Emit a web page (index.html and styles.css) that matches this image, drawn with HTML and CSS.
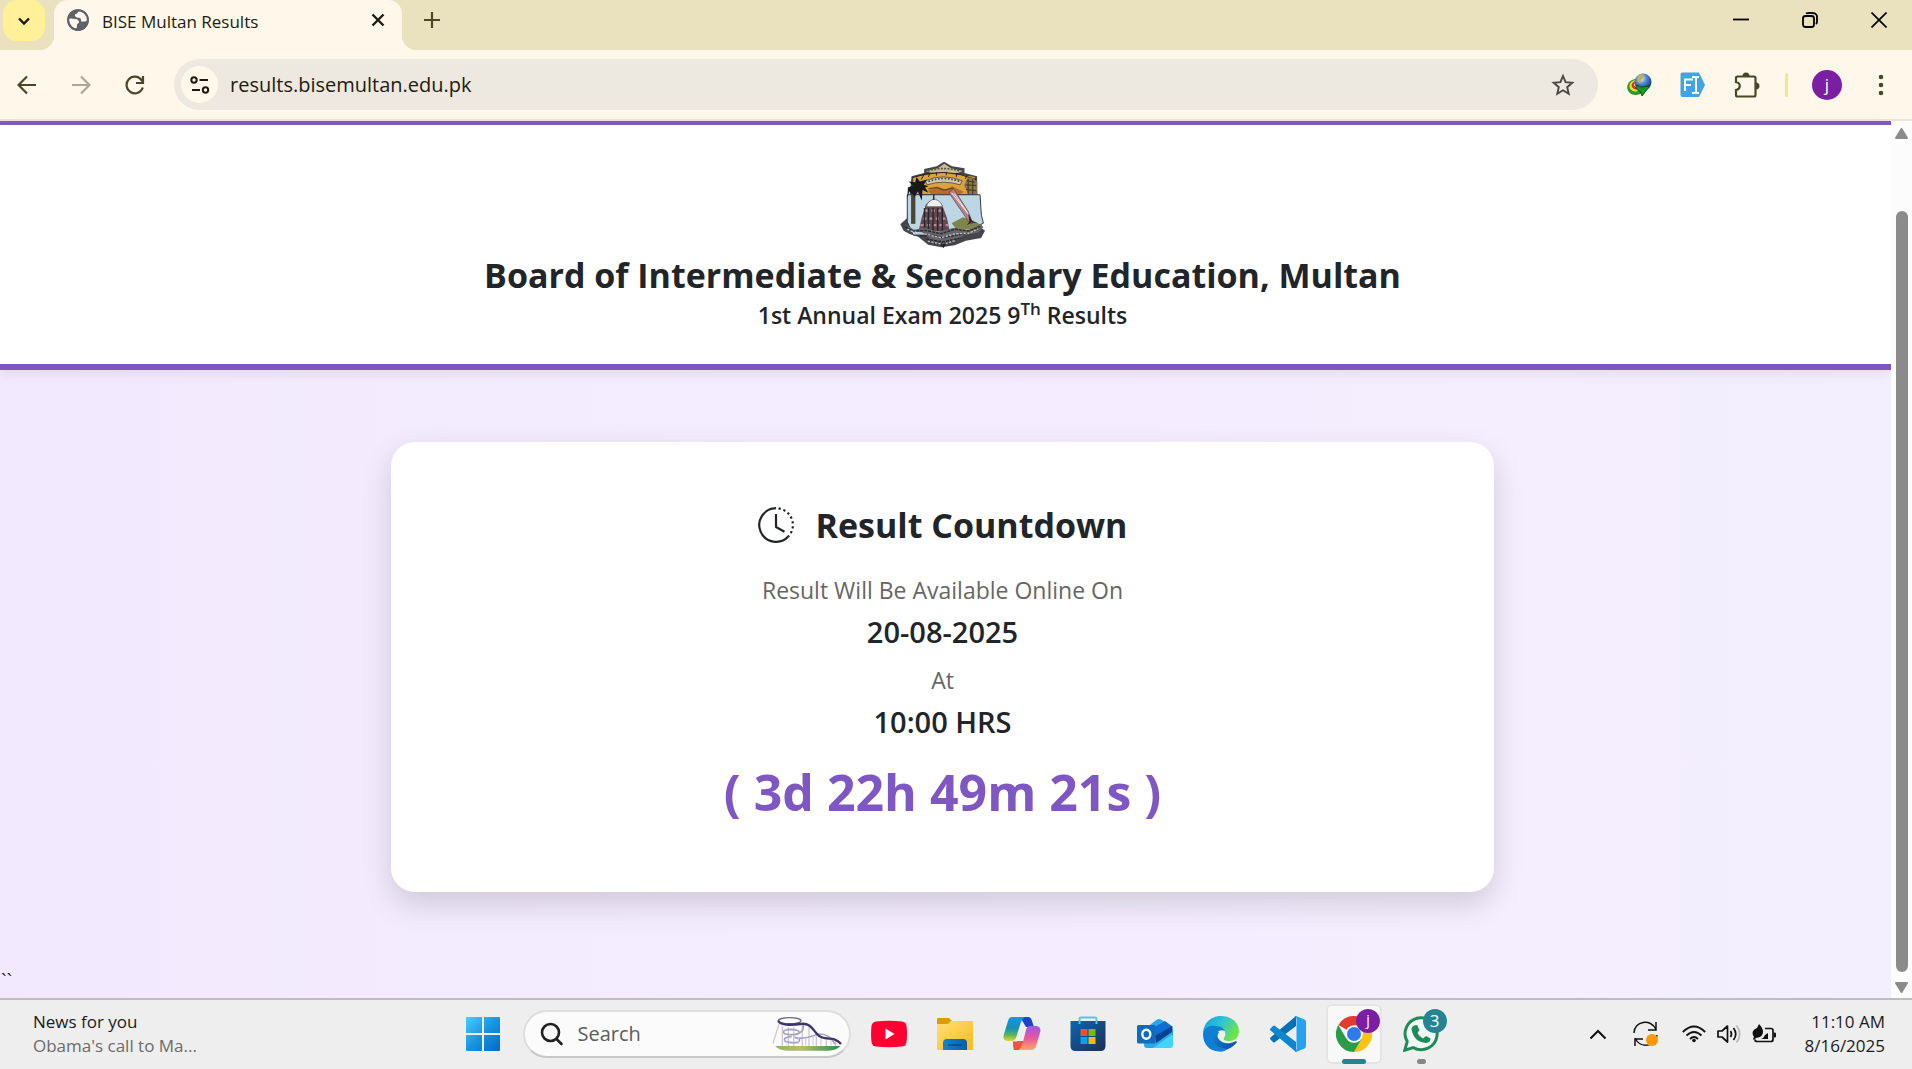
FILE: index.html
```html
<!DOCTYPE html>
<html lang="en">
<head>
<meta charset="utf-8">
<title>BISE Multan Results</title>
<link rel="stylesheet" href="styles.css">
</head>
<body>
<div class="screen">
  <header class="tabstrip">
    <button class="tab-search" aria-label="Search tabs"><svg width="14" height="14" viewBox="0 0 14 14"><path d="M2 4.500l5 5 5-5" fill="none" stroke="#1d1c10" stroke-width="2.400"/></svg></button>
    <div class="tab">
      <svg width="22" height="22" viewBox="0 0 22 22"><circle cx="11" cy="11" r="9.800" fill="#5f6368" stroke="#5f6368" stroke-width="2"/><path d="M12.500 2c-1.500 1-2 2.500-3.500 3-2 .500-1 3 1 3.500 2 .600 4 0 4 2.500s1.500 1.500 3 1.500 3 0 3.500-2C20.500 6 17 2.500 12.500 2zM2 10c2-1 4 0 6 0s4 1 4 3-2 1-2 3 0 3-1 3.500C4 19 1.500 15 2 10z" fill="#fff8ea"/><circle cx="11" cy="11" r="9.800" fill="none" stroke="#5f6368" stroke-width="2"/></svg>
      <span class="tab-title">BISE Multan Results</span>
      <button class="plain" aria-label="Close tab"><svg width="14" height="14" viewBox="0 0 14 14"><path d="M1.500 1.500l11 11M12.500 1.500l-11 11" stroke="#1d1c10" stroke-width="2.400"/></svg></button>
    </div>
    <button class="plain new-tab" aria-label="New tab"><svg width="16" height="16" viewBox="0 0 16 16"><path d="M8 0v16M0 8h16" stroke="#4b4628" stroke-width="2.200"/></svg></button>
    <div class="window-buttons">
      <button class="plain" aria-label="Minimize"><svg width="16" height="16" viewBox="0 0 16 16"><path d="M0 7.500h16" stroke="#000" stroke-width="1.800"/></svg></button>
      <button class="plain" aria-label="Restore"><svg width="16" height="16" viewBox="0 0 16 16" fill="none" stroke="#000" stroke-width="1.800"><rect x="1" y="4" width="11" height="11" rx="2.500"/><path d="M4 1.500c1-.800 8-.800 9 0s2 1 2 3v5c0 1-.500 2-1 2.500"/></svg></button>
      <button class="plain" aria-label="Close"><svg width="16" height="16" viewBox="0 0 16 16"><path d="M.5.5l15 15M15.500.5l-15 15" stroke="#000" stroke-width="1.700"/></svg></button>
    </div>
  </header>

  <nav class="toolbar">
    <div class="nav-buttons">
      <button class="plain" aria-label="Back"><svg width="20" height="20" viewBox="0 0 20 20" fill="none" stroke="#4b4628" stroke-width="2.200"><path d="M19 10H2M10 1.500L1.500 10l8.500 8.500"/></svg></button>
      <button class="plain" aria-label="Forward"><svg width="20" height="20" viewBox="0 0 20 20" fill="none" stroke="#aaa698" stroke-width="2.200"><path d="M1 10h17M10 1.500l8.500 8.500-8.500 8.500"/></svg></button>
      <button class="plain" aria-label="Reload"><svg width="20" height="20" viewBox="0 0 20 20" fill="none" stroke="#4b4628" stroke-width="2.200"><path d="M17.800 12.500A8.300 8.300 0 1 1 16.500 5l1.500 2M18 1v7h-7"/></svg></button>
    </div>
    <div class="omnibox">
      <button class="site-info" aria-label="Site information"><svg width="20" height="18" viewBox="0 0 20 18" fill="none" stroke="#1d1c10" stroke-width="2"><circle cx="4" cy="4" r="2.700"/><path d="M9.500 4H18M2 14h8"/><circle cx="15.500" cy="14" r="2.700"/></svg></button>
      <input class="address" type="text" aria-label="Address" value="results.bisemultan.edu.pk">
      <button class="plain" aria-label="Bookmark"><svg width="24" height="24" viewBox="0 0 24 24" fill="none" stroke="#4b4841" stroke-width="1.900"><path d="M12 3l2.600 6.200 6.700.6-5.100 4.400 1.500 6.600L12 17.300l-5.700 3.500 1.500-6.600-5.100-4.400 6.700-.6z"/></svg></button>
    </div>
    <div class="extensions">
      <button class="plain" aria-label="Download manager"><svg width="26" height="24" viewBox="0 0 26 24"><defs><radialGradient id="globe" cx=".4" cy=".3" r=".8"><stop offset="0" stop-color="#dff0ff"/><stop offset=".4" stop-color="#4c86d8"/><stop offset="1" stop-color="#0a1e50"/></radialGradient></defs><path d="M9 6C0 8-1 17 5 21c4 2 9 1 12-2l-2-4z" fill="#2c9a2c"/><path d="M9 7c-7 2-7 9-2 11 3 1 6 0 8-2z" fill="#f1e228"/><path d="M10 8c-5 1-6 6-2 8 3 1 5 0 6-2z" fill="#e0301c"/><path d="M11 9c-3 1-4 4-1 5h3z" fill="#fff"/><circle cx="17" cy="9" r="8.500" fill="url(#globe)"/><path d="M12 3c3-3 7-1 6 1s-4 3-3 5-3 1-4-1z" fill="#bcb35d"/><path d="M10 12l5 2 9-1-8 10-2-5c-3 0-4-3-4-6z" fill="#159a20" stroke="#063f0a" stroke-width=".8"/></svg></button>
      <button class="plain" aria-label="Font identifier"><svg width="26" height="26" viewBox="0 0 26 26"><path d="M2.500.5H19L25 13l-6 12H2.500a2 2 0 0 1-2-2V2.500a2 2 0 0 1 2-2z" fill="#41a4e4"/><path d="M5 19V7.500h8M5 13h6M12 5h2.500c1 0 1.500.7 1.500 1.500C16 5.700 16.500 5 17.500 5H19M16 6.500v13M12 21h2.500c1 0 1.500-.7 1.500-1.500 0 .8.500 1.500 1.500 1.500H19" fill="none" stroke="#fff" stroke-width="2"/></svg></button>
      <button class="plain" aria-label="Extensions"><svg width="26" height="26" viewBox="0 0 26 26"><path d="M3 4.500h17a1.500 1.500 0 0 1 1.500 1.500v17a1.500 1.500 0 0 1-1.500 1.500H3.500a1.500 1.500 0 0 1-1.500-1.500V18c5-1 5-7 0-8V6a1.500 1.500 0 0 1 1.500-1.500z" fill="none" stroke="#4b4628" stroke-width="2.200"/><path d="M8.500 4a3.500 3.500 0 0 1 7 0zM22 10.500a3.500 3.500 0 0 1 0 7z" fill="#4b4628"/></svg></button>
      <span class="divider"></span>
      <button class="profile" aria-label="Profile">j</button>
      <button class="plain" aria-label="Menu"><svg width="6" height="22" viewBox="0 0 6 22" fill="#4b4628"><circle cx="3" cy="3" r="2.300"/><circle cx="3" cy="11" r="2.300"/><circle cx="3" cy="19" r="2.300"/></svg></button>
    </div>
  </nav>

  <div class="viewport">
    <main class="page">
      <header class="board">
        <svg class="crest" width="88" height="88" viewBox="122 62 256 266">
          <path d="M155 108l38-10v-12l38-8 22-14 24 14 38 6v14l38 10v20l4 130 20 15-12 22-46 8-34 14-40 6-40-8-30-24-26-8-18-10-10-20 20-18z" fill="#45454a"/>
          <path d="M198 92l36-8 20-14 20 14 36 8-16 6h-80z" fill="#c6bb95"/>
          <path d="M204 92q46-14 98 0" fill="none" stroke="#5c5644" stroke-width="5" stroke-dasharray="6 4"/>
          <path d="M160 110l92-14 94 14v52H160z" fill="#dca23f"/>
          <path d="M158 112q94-34 192 6M184 118l8-14M206 110l4-12M230 106v-10M260 105v-10M290 110l2-12M318 116l4-12" fill="none" stroke="#222" stroke-width="3"/>
          <path d="M196 122q54-24 112 0l-6 12q-52-16-100 0z" fill="#cfc7ad" stroke="#302d2b" stroke-width="2"/>
          <path d="M206 124q46-18 94 0" fill="none" stroke="#444" stroke-width="5" stroke-dasharray="5 5"/>
          <path d="M204 152l30-12 24 8 20-10 36 18-18 8h-80z" fill="#b86b2c"/>
          <path d="M206 146l24-4 22 8 30-6" fill="none" stroke="#6a4a22" stroke-width="4"/>
          <path d="M314 136l8-20 12-6 20 14-2 40-26-2z" fill="#8c7744"/>
          <path d="M322 122l24 4M318 134l32 2M320 148l30 4M326 116v46M340 118v44" stroke="#3d3528" stroke-width="3"/>
          <path d="M142 164h220l4 62 6 24-40 20-54 16H160l-18-40z" fill="#bdd6e6" stroke="#37383c" stroke-width="3"/>
          <path d="M160 162v90" stroke="#4c4630" stroke-width="13"/>
          <path d="M162 166l-14-12-6 22 2-34 16-6-14-12 20 2 4-16 10 14 22-6-10 16 14 4-10 4 10 16-18-8-2 32-12-28-12 20z" fill="#17191a"/>
          <path d="M276 250l34-18 28 8 28 16-12 10-60 6z" fill="#80854b"/>
          <path d="M268 158l14-12 44 68 14 36-8 2-20-30z" fill="#b7838a" stroke="#533e47" stroke-width="2"/>
          <path d="M276 158l52 66M284 160l40 58" stroke="#efe9ed" stroke-width="3"/>
          <path d="M326 220l12 24 18 6-20-2-14 8 8-10z" fill="#252525"/>
          <path d="M196 202c0-12 12-18 24-24 16 4 28 12 30 24l12 32 8 40H176l10-42z" fill="#5e4a50"/>
          <path d="M200 200c2-14 12-18 22-24 14 4 24 12 26 24z" fill="#eee" stroke="#555" stroke-width="2"/>
          <path d="M222 164v16" stroke="#222" stroke-width="4"/>
          <path d="M196 212h58M190 236h68M182 256h84" stroke="#c08a96" stroke-width="7" stroke-dasharray="10 9"/>
          <path d="M194 204v66M206 204v66M220 204v70M234 204v70M248 204v70" stroke="#26242b" stroke-width="4"/>
          <path d="M134 252l28 18 32-6 40 12 50-12 40 10 40-22 8 10-16 16-38 8-36 14-32 8-36-8-26-22-34-6z" fill="#66666a"/>
          <path d="M136 262l26 12 36-2 44 10 46-14 40 6 34-14M180 288l40-2 30 8 40-8 36-6M200 298l50 8 48-10" fill="none" stroke="#292a2e" stroke-width="4" stroke-dasharray="9 3"/>
          <path d="M142 268l24 12 28 2 50 12 42-12 42-2 28-12M204 304l46 10 38-12" fill="none" stroke="#c1c1c1" stroke-width="4" stroke-dasharray="7 4"/>
          <path d="M242 312l9 14 9-14z" fill="#222"/>
        </svg>
        <h1 class="board-name">Board of Intermediate &amp; Secondary Education, Multan</h1>
        <h2 class="exam">1st Annual Exam 2025 9<sup>Th</sup> Results</h2>
      </header>
      <section class="countdown-area">
        <article class="card">
          <h2 class="card-title">
            <svg width="36" height="36" viewBox="0 0 36 36" fill="none" stroke="#212529" stroke-width="2.200"><path d="M18 1.200A16.800 16.800 0 1 0 30.500 29.300"/><path d="M18 1.200A16.800 16.800 0 0 1 30.500 29.300" stroke-dasharray="2.200 2.800" stroke-dashoffset="-2.600"/><path d="M18 7v13l8.500 4.700" stroke-linejoin="round"/></svg>
            Result Countdown
          </h2>
          <p class="label">Result Will Be Available Online On</p>
          <p class="value">20-08-2025</p>
          <p class="label">At</p>
          <p class="value">10:00 HRS</p>
          <p class="timer">( 3d 22h 49m 21s )</p>
        </article>
      </section>
      <p class="stray">``</p>
    </main>
    <div class="scrollbar" aria-hidden="true">
      <svg width="13" height="11" viewBox="0 0 13 11"><path d="M6.500 1L12 10H1z" fill="#8b8b8b" stroke="#8b8b8b" stroke-width="2" stroke-linejoin="round"/></svg>
      <span class="thumb"></span>
      <svg width="13" height="11" viewBox="0 0 13 11"><path d="M6.500 10L12 1H1z" fill="#8b8b8b" stroke="#8b8b8b" stroke-width="2" stroke-linejoin="round"/></svg>
    </div>
  </div>

  <footer class="taskbar">
    <a class="news" href="#"><span>News for you</span><span class="news-sub">Obama's call to Ma...</span></a>
    <div class="dock">
      <button class="app" aria-label="Start"><svg width="36" height="36" viewBox="0 0 36 36"><defs><linearGradient id="win" x1="0" y1="0" x2="36" y2="36" gradientUnits="userSpaceOnUse"><stop offset="0" stop-color="#4cd0ff"/><stop offset=".5" stop-color="#1894e0"/><stop offset="1" stop-color="#0067c8"/></linearGradient></defs><path d="M1 2a1 1 0 0 1 1-1h15v16H1zM19 1h15a1 1 0 0 1 1 1v15H19zM1 19h16v16H2a1 1 0 0 1-1-1zM19 19h16v15a1 1 0 0 1-1 1H19z" fill="url(#win)"/></svg></button>
      <label class="search">
        <svg width="24" height="24" viewBox="0 0 24 24" fill="none" stroke="#222" stroke-width="2.600" stroke-linecap="round"><circle cx="10.500" cy="10.500" r="8.500"/><path d="M16.500 17l5 5"/></svg>
        <input type="search" placeholder="Search" aria-label="Search">
        <svg width="72" height="36" viewBox="0 0 216 108" fill="none"><defs><linearGradient id="grass"><stop offset="0" stop-color="#93b25d"/><stop offset=".4" stop-color="#b9bd6e"/><stop offset="1" stop-color="#269348"/></linearGradient></defs><path d="M24 24L6 82M34 30v60M52 34v58M68 34v58M94 30v62M114 30v62M136 56v36M166 68v24M194 70v22" stroke="#d6c6cc" stroke-width="4"/><path d="M60 40c-30 0-30 16 0 16s36-14 0-16M62 62c-28 2-30 16 0 18s30-14 8-16M96 24c4 20-4 26-22 32M80 66c40 4 50-12 66-12s34 8 46 30" stroke="#a3a3c6" stroke-width="5"/><path d="M82 84V62M104 88V66M126 88V60M150 88V60M180 88V64" stroke="#cdc7dc" stroke-width="3"/><ellipse cx="56" cy="14" rx="34" ry="9" stroke="#6d6a75" stroke-width="4"/><path d="M22 14c2 14 40 14 66 10s34 10 48 28 34 14 54 18q12 4 20 14" stroke="#3d3768" stroke-width="7"/><path d="M12 90h196q-12 14-36 14H48q-22 0-36-14z" fill="url(#grass)"/></svg>
      </label>
      <div class="apps">
        <button class="app" aria-label="YouTube"><svg width="36" height="36" viewBox="0 0 36 36"><path d="M5 5.500Q18 4 31 5.500q4 .5 4.500 4.500 1 8 0 16-.5 4-4.500 4.500-13 1.500-26 0Q1 30 .5 26q-1-8 0-16Q1 6 5 5.500z" fill="#ff0033"/><path d="M14.500 12.500v11l9-5.500z" fill="#fff"/></svg></button>
        <button class="app" aria-label="File Explorer"><svg width="36" height="36" viewBox="0 0 36 36"><defs><linearGradient id="fold" x1="0" y1="0" x2="1" y2="1"><stop offset="0" stop-color="#ffe07a"/><stop offset="1" stop-color="#f9b918"/></linearGradient><linearGradient id="pocket" x1="0" x2="1"><stop offset="0" stop-color="#1085d5"/><stop offset="1" stop-color="#0b5fa8"/></linearGradient></defs><path d="M0 3a1 1 0 0 1 1-1h11l3 3v6H0z" fill="#dc9c07"/><path d="M0 8h10q2 0 3-2l1-1h21a1 1 0 0 1 1 1v27a1 1 0 0 1-1 1H1a1 1 0 0 1-1-1z" fill="url(#fold)"/><path d="M6 34V27q0-4 4-4h16q4 0 4 4v7z" fill="url(#pocket)"/><path d="M11 29h14" stroke="#084a82" stroke-width="1.500"/></svg></button>
        <button class="app" aria-label="Copilot"><svg width="38" height="36" viewBox="0 0 38 36"><defs><linearGradient id="cpa" x1="0" y1="0" x2="0" y2="1"><stop offset="0" stop-color="#1498e8"/><stop offset=".45" stop-color="#158fb8"/><stop offset=".75" stop-color="#55b65a"/><stop offset="1" stop-color="#ecd52c"/></linearGradient><linearGradient id="cpb" x1="0" y1="0" x2="0" y2="1"><stop offset="0" stop-color="#9c58ea"/><stop offset=".5" stop-color="#e8579a"/><stop offset="1" stop-color="#ffa76c"/></linearGradient></defs><path d="M17 1h8q3 0 4 4l2 6h-8l-3-5z" fill="#1b45c4"/><path d="M9 1h13q-3 1-5 8l-4 13q-1 3-5 3H5q-6 0-4-7L5 5q1-4 4-4z" fill="url(#cpa)"/><path d="M11 34h8l4-9h-8q-3 1-5 0 0 8 1 9z" fill="#ee553f"/><path d="M27 10h5q7 0 5 7l-4 13q-1 4-5 4H15q3-1 5-8l3-12q1-4 4-4z" fill="url(#cpb)"/></svg></button>
        <button class="app" aria-label="Microsoft Store"><svg width="36" height="36" viewBox="0 0 36 36"><defs><linearGradient id="bag" x1="0" y1="0" x2="1" y2="1"><stop offset="0" stop-color="#0a66b4"/><stop offset="1" stop-color="#1d2f55"/></linearGradient></defs><path d="M.5 5h35v25q0 5-5 5h-25q-5 0-5-5z" fill="url(#bag)"/><path d="M9.500 8V3q0-1.500 1.500-1.500h14q1.500 0 1.500 1.500v5" fill="none" stroke="#4ac8f0" stroke-width="2"/><path d="M10.500 13h7v7h-7z" fill="#f25022"/><path d="M18.500 13h7v7h-7z" fill="#7fba00"/><path d="M10.500 21h7v7h-7z" fill="#00a4ef"/><path d="M18.500 21h7v7h-7z" fill="#ffb900"/></svg></button>
        <button class="app" aria-label="Outlook"><svg width="36" height="36" viewBox="0 0 36 36"><path d="M9 12L20 3.500q2-1 4 0L34 10q2 1 2 3v15q0 4-4 4H10q-3 0-3-3z" fill="#28a8ea"/><path d="M12 14l16-9 8 6-18 12z" fill="#0f6fd0"/><path d="M18 20l17-10v6L19 27z" fill="#0a4394"/><path d="M16 32l18-13q2-1 2 2v7q0 4-4 4z" fill="#42d4fb"/><rect x="0" y="9" width="18.500" height="18.500" rx="1.500" fill="#0f6cbd"/><ellipse cx="9.300" cy="18.200" rx="4" ry="4.500" fill="none" stroke="#fff" stroke-width="2.400"/></svg></button>
        <button class="app" aria-label="Edge"><svg width="36" height="36" viewBox="0 0 36 36"><defs><linearGradient id="edga" x1="0" y1="0" x2="1" y2=".5"><stop offset="0" stop-color="#149bdf"/><stop offset=".5" stop-color="#2cc4d8"/><stop offset="1" stop-color="#6ee546"/></linearGradient><linearGradient id="edgb" x1="0" y1="0" x2="1" y2="1"><stop offset="0" stop-color="#0c86d8"/><stop offset="1" stop-color="#124a9c"/></linearGradient></defs><path d="M0 18C0 6 9 0 18 0c11 0 18 7 18 15 0 7-5 10-10 10-4 0-6-1-5-3 3-4 1-9-4-10C10 9 2 12 0 18z" fill="url(#edga)"/><path d="M0 18c1-7 8-9 13-8 5 0 8 3 9 5-6-3-12 3-9 10 2 6 7 8 12 8-3 2-6 3-9 2.500C6 35 0 28 0 18z" fill="#0d80d4"/><path d="M12 17c-4 9 3 16 13 16 3-1 7-4 9-7 0-1-1-1-2-.5-6 3-13 2-16-2-2-2-2-5 0-7-2-1-3 0-4 .5z" fill="url(#edgb)"/></svg></button>
        <button class="app" aria-label="Visual Studio Code"><svg width="36" height="36" viewBox="0 0 36 36"><path d="M26 0v10L5 26q-1 1-2 0l-2.500-2.500q-1-1 0-2z" fill="#0570b5"/><path d="M26 36V26L5 10q-1-1-2 0L.5 12.500q-1 1 0 2z" fill="#0c86d0"/><path d="M26 0l8.500 3.500Q36 4 36 6v24q0 2-1.500 2.500L26 36q-1 0-1.500-1 2 0 2-2V3q0-2-2-2 .5-1 1.500-1z" fill="#25a1f0"/></svg></button>
        <button class="app active" aria-label="Chrome"><svg width="36" height="36" viewBox="0 0 36 36"><path d="M18 18L2.400 9A18 18 0 0 1 33.600 9H18z" fill="#e33b2e"/><path d="M33.600 9A18 18 0 0 1 18 36l7.800-13.500L18 9z" fill="#fbc116"/><path d="M2.400 9A18 18 0 0 0 18 36l7.800-13.500H10.200z" fill="#2a9b49"/><circle cx="18" cy="18" r="8.800" fill="#fff"/><circle cx="18" cy="18" r="7" fill="#2f7bea"/></svg><span class="badge purple">j</span></button>
        <button class="app running" aria-label="WhatsApp"><svg width="36" height="36" viewBox="0 0 36 36"><path d="M1.800 34.200l2.400-8.600a16 16 0 1 1 6 6z" fill="#f4fbf6" stroke="#1d8c56" stroke-width="3"/><path d="M11 9.500l3-.5 2.500 5-2 3q2 4 5.500 5.500l3-2.500 4.500 2.500q0 4-4.500 4.500Q11 26 8.500 13.500q0-3 2.500-4z" fill="#1d8c56"/></svg><span class="badge teal">3</span></button>
      </div>
    </div>
    <div class="tray">
      <button class="plain" aria-label="Show hidden icons"><svg width="18" height="12" viewBox="0 0 18 12"><path d="M1.500 10.500L9 3l7.500 7.500" fill="none" stroke="#111" stroke-width="2"/></svg></button>
      <button class="plain update" aria-label="Update"><svg width="26" height="26" viewBox="0 0 26 26" fill="none" stroke="#111" stroke-width="1.500"><path d="M1 12C1 0 18-3 23 8.500M23 1v8h-8M24 14c-1 12-17 14-22 3M2 25v-7h8"/><circle cx="19" cy="19" r="6" fill="#ff9800" stroke="none"/></svg></button>
      <button class="plain network" aria-label="Network, volume and battery">
        <svg width="24" height="18" viewBox="0 0 24 18" fill="none" stroke="#111" stroke-width="1.800"><path d="M.8 7Q12-4 23.200 7M4.500 10.500q7.500-7 15 0M8 14q4-4 8 0"/><circle cx="12" cy="15.500" r="1.800" fill="#111" stroke="none"/></svg>
        <svg width="24" height="20" viewBox="0 0 24 20" fill="none" stroke="#111" stroke-width="1.700"><path d="M1 7v6h4l5.500 5V2L5 7z" stroke-linejoin="round"/><path d="M13.500 7q2 3 0 6M16.500 4q4.500 6 0 12"/><path d="M19.500 1.500q6.500 8.500 0 17" stroke="#bbb"/></svg>
        <svg width="24" height="20" viewBox="0 0 24 20"><path d="M13 4.500h6q2 0 2 2v9q0 2-2 2H5q-2 0-2-2" fill="none" stroke="#111" stroke-width="1.700"/><path d="M22 8.500h1q1 0 1 1.500v2q0 1.500-1 1.500h-1zM7 0q4 4 4 7.500t-3 5.500l-4 1-2 2-1-1 1-2Q-2 7 5 4zM9 15q3-1 4-4l3-2v6z" fill="#111"/></svg>
      </button>
      <button class="plain clock"><time>11:10 AM</time><time>8/16/2025</time></button>
    </div>
  </footer>
</div>
</body>
</html>
```
FILE: styles.css
```css
* { box-sizing: border-box; }

body {
  margin: 0;
  font-family: "Open Sans", "Noto Sans", sans-serif;
  color: #212529;
}

h1, h2, p { margin: 0; }

button, input { font: inherit; color: inherit; }

svg { display: block; flex: none; }

.screen {
  display: flex;
  flex-direction: column;
  min-height: 100vh;
}

.plain {
  display: flex;
  align-items: center;
  padding: 0;
  border: 0;
  background: none;
}

/* Tab strip */
.tabstrip {
  display: flex;
  align-items: flex-start;
  height: 50px;
  padding-left: 3px;
  background: #eae2be;
}

.tab-search {
  display: grid;
  place-items: center;
  width: 42px;
  height: 41px;
  padding: 0;
  border: 0;
  border-radius: 14px;
  background: #fff099;
}

.tab {
  position: relative;
  display: flex;
  align-items: center;
  gap: 13px;
  width: 348px;
  height: 50px;
  margin-left: 9px;
  padding: 0 17px 10px 13px;
  border-radius: 14px 14px 0 0;
  background: #fff8ea;
}

.tab::before,
.tab::after {
  content: "";
  position: absolute;
  bottom: 0;
  width: 14px;
  height: 14px;
}

.tab::before {
  right: 100%;
  background: radial-gradient(circle at 0 0, transparent 14px, #fff8ea 14px);
}

.tab::after {
  left: 100%;
  background: radial-gradient(circle at 100% 0, transparent 14px, #fff8ea 14px);
}

.tab-title {
  flex: 1;
  padding-top: 3px;
  font-size: 17px;
  line-height: 24px;
  color: #1d1c10;
}

.new-tab { height: 40px; margin-left: 22px; }

.window-buttons {
  display: flex;
  gap: 53px;
  height: 40px;
  margin-left: auto;
  padding-right: 25px;
}

/* Toolbar */
.toolbar {
  display: flex;
  align-items: center;
  height: 71px;
  padding: 0 28px 0 17px;
  border-bottom: 2px solid #ece6da;
  background: #fff8ea;
}

.nav-buttons { display: flex; gap: 34px; }

.omnibox {
  display: flex;
  flex: 1;
  align-items: center;
  height: 51px;
  margin: 0 28px 0 29px;
  padding: 0 23px 0 7px;
  border-radius: 26px;
  background: #ede8e0;
}

.site-info {
  display: grid;
  place-items: center;
  width: 37px;
  height: 37px;
  padding: 0;
  border: 0;
  border-radius: 50%;
  background: #fff8ea;
}

.address {
  flex: 1;
  min-width: 0;
  margin-left: 12px;
  padding: 0;
  border: 0;
  outline: 0;
  background: none;
  font-size: 20px;
  color: #1d1c10;
}

.extensions { display: flex; align-items: center; gap: 28px; }

.divider {
  width: 3px;
  height: 24px;
  margin: 0 -4px 0 -3px;
  border-radius: 2px;
  background: #f3e58a;
}

.profile {
  width: 30px;
  height: 30px;
  padding: 0;
  border: 0;
  border-radius: 50%;
  background: #7b1fa2;
  color: #fff;
  font-size: 17px;
  line-height: 28px;
}

.profile + .plain { margin-left: 8px; }

/* Web page */
.viewport { display: flex; flex: 1; }

.page {
  display: flex;
  flex: 1;
  flex-direction: column;
  background: linear-gradient(90deg, #f2e9fe 0%, #f5edff 60%, #f3effe 100%);
}

.board {
  display: flex;
  flex-direction: column;
  align-items: center;
  padding: 36px 6px 31px 0;
  border-top: 4px solid #7e57c2;
  border-bottom: 6px solid #7e57c2;
  background: #fff;
  box-shadow: 0 4px 12px rgba(0, 0, 0, 0.08);
}

.crest { margin-bottom: 4px; }

.board-name {
  font-size: 34px;
  font-weight: 700;
  line-height: 44px;
}

.exam {
  font-size: 23px;
  font-weight: 600;
  line-height: 36px;
}

.exam sup { font-size: 17px; line-height: 0; }

.countdown-area {
  display: flex;
  justify-content: center;
  padding: 72px 6px 0 0;
}

.card {
  width: 1103px;
  max-width: 90%;
  padding: 64px;
  border-radius: 24px;
  background: #fff;
  box-shadow: 0 12px 30px rgba(0, 0, 0, 0.15);
  text-align: center;
}

.card-title {
  display: flex;
  align-items: center;
  justify-content: center;
  gap: 22px;
  margin-bottom: 28px;
  font-size: 34px;
  font-weight: 700;
  line-height: 38px;
}

.label {
  font-size: 23px;
  line-height: 36px;
  color: #666;
}

.value {
  margin-bottom: 6px;
  font-size: 29px;
  font-weight: 600;
  line-height: 48px;
}

.timer {
  margin-top: 10px;
  font-size: 50px;
  font-weight: 700;
  line-height: 72px;
  color: #7e57c2;
}

.stray {
  margin-top: auto;
  padding: 0 0 4px 1px;
  font-size: 20px;
  line-height: 27px;
}

.scrollbar {
  display: flex;
  flex-direction: column;
  align-items: center;
  gap: 10px;
  width: 21px;
  padding: 7px 0 5px;
  background: #fcfcfc;
}

.thumb {
  flex: 1;
  width: 12px;
  margin-top: 62px;
  border-radius: 6px;
  background: #8b8b8b;
}

/* Taskbar */
.taskbar {
  display: grid;
  grid-template-columns: 1fr auto 1fr;
  align-items: center;
  height: 71px;
  padding: 0 27px 2px 18px;
  border-top: 2px solid #bdbdc1;
  background: #eee;
}

.news {
  display: flex;
  flex-direction: column;
  padding-left: 15px;
  font-size: 17px;
  line-height: 24px;
  color: #1b1b1b;
  text-decoration: none;
}

.news-sub { color: #6b6b6b; }

.dock { display: flex; align-items: center; }

.app {
  position: relative;
  display: grid;
  place-items: center;
  width: 56px;
  height: 60px;
  padding: 0;
  border: 0;
  border-radius: 6px;
  background: none;
}

.search {
  display: flex;
  align-items: center;
  width: 328px;
  height: 48px;
  margin: 0 10px 0 12px;
  padding: 0 6px 0 15px;
  border: 2px solid #dedede;
  border-bottom-color: #c8c8c8;
  border-radius: 24px;
  background: #fbfbfb;
}

.search input {
  flex: 1;
  min-width: 0;
  margin-left: 14px;
  padding: 0;
  border: 0;
  outline: 0;
  background: none;
  font-size: 20px;
}

.search input::placeholder { color: #5c5c5c; opacity: 1; }

.apps { display: flex; justify-content: space-between; width: 588px; }

.active {
  background: #f8f8f8;
  box-shadow: inset 0 0 0 2px #e4e4e4;
}

.active::after,
.running::after {
  content: "";
  position: absolute;
  bottom: 0;
  left: 24px;
  width: 9px;
  height: 5px;
  border-radius: 3px;
  background: #878787;
}

.active::after { left: 16px; width: 24px; background: #268391; }

.badge {
  position: absolute;
  top: 5px;
  right: 2px;
  width: 24px;
  height: 24px;
  border-radius: 50%;
  color: #fff;
  font-size: 17px;
  line-height: 24px;
}

.purple { background: #7b1fa2; font-size: 14px; line-height: 22px; }

.teal { background: #268391; }

.tray {
  display: flex;
  align-items: center;
  justify-content: flex-end;
}

.update { margin-left: 26px; }

.network { gap: 11px; margin-left: 23px; }

.clock {
  flex-direction: column;
  align-items: flex-end;
  margin-left: 28px;
  font-size: 17px;
  line-height: 24px;
  color: #1b1b1b;
}
```
